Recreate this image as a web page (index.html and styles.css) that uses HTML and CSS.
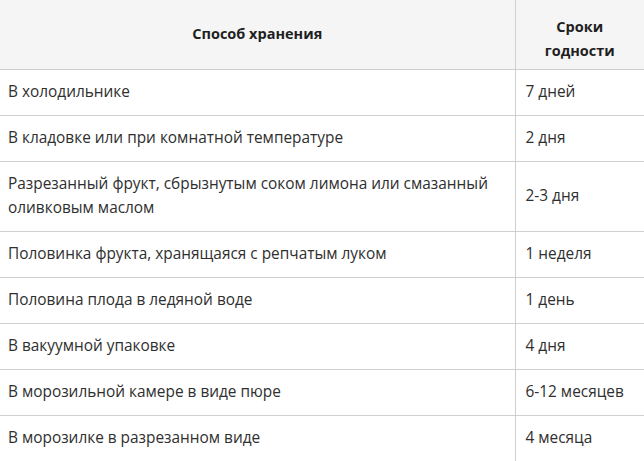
FILE: index.html
```html
<!DOCTYPE html>
<html lang="ru">
<head>
<meta charset="utf-8">
<title>Сроки хранения</title>
<link rel="stylesheet" href="styles.css">
</head>
<body>
<table class="storage">
  <thead>
    <tr>
      <th class="col-method">Способ хранения</th>
      <th class="col-term">Сроки годности</th>
    </tr>
  </thead>
  <tbody>
    <tr><td>В холодильнике</td><td>7 дней</td></tr>
    <tr><td>В кладовке или при комнатной температуре</td><td>2 дня</td></tr>
    <tr><td>Разрезанный фрукт, сбрызнутым соком лимона или смазанный оливковым маслом</td><td>2-3 дня</td></tr>
    <tr><td>Половинка фрукта, хранящаяся с репчатым луком</td><td>1 неделя</td></tr>
    <tr><td>Половина плода в ледяной воде</td><td>1 день</td></tr>
    <tr><td>В вакуумной упаковке</td><td>4 дня</td></tr>
    <tr><td>В морозильной камере в виде пюре</td><td>6-12 месяцев</td></tr>
    <tr><td>В морозилке в разрезанном виде</td><td>4 месяца</td></tr>
  </tbody>
</table>
</body>
</html>
```

FILE: styles.css
```css
html, body {
  margin: 0;
  padding: 0;
  background: #ffffff;
}

.storage {
  width: 644px;
  border-collapse: collapse;
  table-layout: fixed;
  font-family: "Open Sans", "Noto Sans", sans-serif;
  font-size: 15.4px;
  line-height: 24px;
  color: #2f2f2f;
}

.storage th {
  background: #f5f5f5;
  color: #1f1f1f;
  font-weight: 700;
  font-size: 14.5px;
  text-align: center;
  vertical-align: middle;
  padding: 10px 10px 11px;
  border-bottom: 1px solid #cfcfcf;
}

.storage .col-method {
  width: 515px;
  box-sizing: border-box;
}

.storage .col-term {
  padding-top: 15px;
  padding-bottom: 6px;
}

.storage td {
  padding: 10px 10px 11px 8px;
  border-bottom: 1px solid #cfcfcf;
  vertical-align: middle;
}

.storage th + th,
.storage td + td {
  border-left: 1px solid #cfcfcf;
  padding-left: 10px;
}
```
